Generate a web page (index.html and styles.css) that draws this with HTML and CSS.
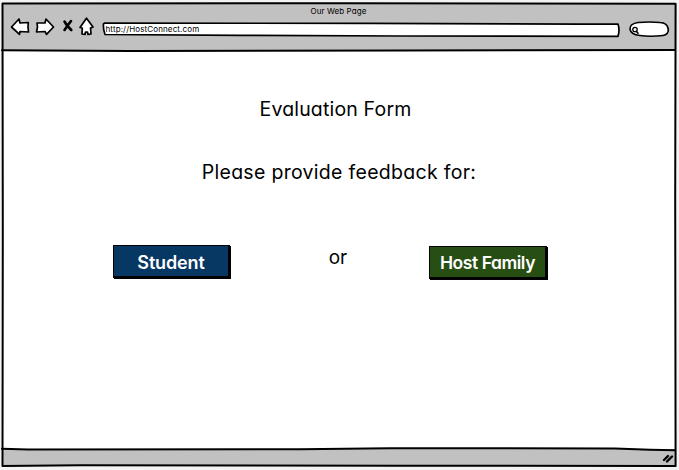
FILE: index.html
```html
<!DOCTYPE html>
<html lang="en">
<head>
<meta charset="utf-8">
<title>Our Web Page</title>
<link rel="stylesheet" href="styles.css">
</head>
<body>
<div class="browser">
  <header class="chrome">
    <div class="title"><span>Our Web Page</span></div>
    <div class="toolbar">
      <svg class="nav" width="92" height="24" viewBox="8 15 92 24">
        <path d="M11.500 27 L19 19 L20 23 L28.300 22.500 L28 27 L28.500 32 L20 31.500 L19.500 34.300 Z"/>
        <path d="M37 23 L45 23 L46 19 L53.500 27 L46.500 34.300 L45 31.500 L36.500 32 L37.500 27 Z"/>
        <path class="stop" d="M64.500 21.500 L67 25.500 L71.300 30 M71 21 L68 25 L64.500 30"/>
        <path d="M86.500 18.200 L93 27 L90.500 28 L91 34 L88 34.500 L87.500 32 L85.500 32 L85 34.500 L82 34 L82.300 28 L80 27.500 Z"/>
      </svg>
      <div class="address">
        <svg class="outline" width="518" height="16" viewBox="102 22 518 16"><path d="M104.500 23.200 L370 23.300 L580 24.200 L618 24 Q620 30 618 36.300 L400 36 L240 35.300 L105 34.500 Q103 29 103.500 23.800 Z"/></svg>
        <span class="url">http://HostConnect.com</span>
      </div>
      <svg class="search" width="42" height="18" viewBox="628 20 42 18">
        <path d="M638 22.500 Q650 21.500 660 22.500 C670 23 671 35 663 35.500 Q650 37 640 35.500 C627 34 627 24 638 22.500 Z"/>
        <circle cx="635" cy="29.500" r="2.200"/><path class="handle" d="M636.500 31.500 L638 33.200"/>
      </svg>
    </div>
  </header>
  <main class="content">
    <h1 class="heading"><span>Evaluation Form</span></h1>
    <p class="prompt"><span>Please provide feedback for:</span></p>
    <div class="choices">
      <button class="choice student"><span>Student</span></button>
      <span class="or">or</span>
      <button class="choice host"><span>Host Family</span></button>
    </div>
  </main>
  <footer class="status">
    <svg width="12" height="10" viewBox="0 0 12 10"><path d="M2 7 L6 3 M5 8.500 L10 3.500"/></svg>
  </footer>
  <svg class="frame" width="679" height="470" viewBox="0 0 679 470">
    <path d="M2.500 3.500 L350 3.200 L675.600 3.700 L675.200 200 L675.600 466 L400 465.700 L80 465.200 L2.500 466 L2.800 230 Z"/>
    <path d="M2 50.200 L130 50.900 L400 50.500 L675 50"/>
    <path d="M2 448.800 L28 449.600 L300 449.300 L390 448.200 L615 448.500 L650 449.800 L675 450.200"/>
  </svg>
</div>
</body>
</html>
```
FILE: styles.css
```css
* { box-sizing: border-box; }
body {
  margin: 0;
  width: 679px;
  height: 470px;
  overflow: hidden;
  background: #f3f3f3;
  font-family: Inter, "Liberation Sans", sans-serif;
  font-feature-settings: "cv11";
  color: #000;
}
.browser {
  display: grid;
  grid-template-rows: 47px 399px 17px;
  padding: 3px 3px 4px 2px;
  height: 470px;
}
svg { display: block; }
path, circle { fill: #fff; stroke: #000; stroke-width: 1.700; stroke-linejoin: round; stroke-linecap: round; }
.frame { position: absolute; top: 0; left: 0; pointer-events: none; }
.frame path { fill: none; stroke-width: 2; }
.chrome { background: #c1c1c1; }
.title {
  height: 16px;
  font-size: 8px;
  line-height: 16px;
  letter-spacing: 0.100px;
  text-align: center;
  padding-right: 1px;
}
.toolbar { display: flex; align-items: flex-start; padding-left: 6px; }
.nav { margin-top: -4px; }
.nav .stop { stroke-width: 2.600; fill: none; }
.address {
  display: grid;
  width: 518px;
  margin: 3px 8px 0 2px;
}
.address > * { grid-area: 1 / 1; }
.url { padding-left: 3.500px; font-size: 8px; line-height: 14px; letter-spacing: 0.130px; }
.search { margin-top: 1px; }
.search circle { stroke-width: 1.300; }
.content { background: #fff; text-align: center; }
.heading, .prompt { margin: 0; font-size: 19.500px; font-weight: 400; line-height: 24px; white-space: nowrap; }
.heading { padding-top: 47px; padding-right: 7px; letter-spacing: 0.170px; }
.prompt { margin-top: 39px; letter-spacing: 0.300px; }
.choices {
  display: grid;
  grid-template-columns: 117px 199px 118px;
  margin: 61px 0 0 111px;
}
.choice {
  height: 33px;
  padding: 2px 0 0;
  border: solid #000;
  border-width: 1px 2px 2px 1px;
  box-shadow: 1px 1px 0 #000;
  color: #fff;
  font: 600 18px/30px Inter, sans-serif;
  font-feature-settings: "cv11";
  white-space: nowrap;
}
.student { background: #073763; letter-spacing: -0.150px; }
.host { background: #274e13; margin-top: 1px; padding-top: 1px; font-size: 17.500px; letter-spacing: -0.450px; }
.or { font-size: 19px; line-height: 26px; padding-left: 17px; }
.status { display: flex; justify-content: flex-end; align-items: center; background: #c1c1c1; padding-right: 2px; }
.status path { fill: none; stroke-width: 2.400; }
```
